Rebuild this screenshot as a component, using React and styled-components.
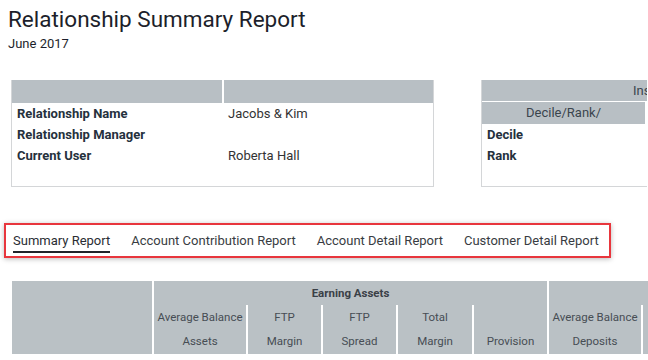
import React from "react";
import styled, { createGlobalStyle } from "styled-components";

const GlobalStyle = createGlobalStyle`
  html, body {
    margin: 0;
    padding: 0;
    overflow: hidden;
    background: #fff;
    font-family: Roboto, "Liberation Sans", Arial, sans-serif;
  }
`;

const Page = styled.div`
  width: 648px;
  height: 360px;
  padding: 6px 0 0 8px;
  box-sizing: border-box;
  overflow: hidden;
`;

const Title = styled.h1`
  margin: 0;
  font-size: 22.5px;
  line-height: 26px;
  font-weight: 400;
  color: #1d1f2b;
`;

const Subtitle = styled.div`
  margin-top: 5px;
  font-size: 13px;
  line-height: 14px;
  color: #1d1f2b;
`;

const InfoRow = styled.div`
  display: flex;
  gap: 47px;
  margin: 29px 0 0 3px;
  width: 1000px;
`;

const InfoBox = styled.div`
  width: ${p => p.$width};
  height: 107px;
  box-sizing: border-box;
  border: 1px solid #d4d6d8;
  border-top: 0;
  ${p => p.$open && "border-right: 0;"}
`;

const HeadGrid = styled.div`
  display: grid;
  grid-template-columns: ${p => p.$cols};
  column-gap: 2px;
  margin-bottom: ${p => p.$gap || 0}px;
`;

const HeadCell = styled.div`
  height: ${p => p.$h}px;
  padding-left: ${p => p.$indent || 0}px;
  background: #b8bfc4;
  font-size: 13px;
  line-height: ${p => p.$h}px;
  color: #3b454e;
  text-align: ${p => (p.$indent ? "left" : "center")};
  white-space: nowrap;
  overflow: hidden;
`;

const BodyRow = styled.div`
  display: grid;
  grid-template-columns: 210px 1fr;
  column-gap: 2px;
  height: 21px;
  align-items: center;
  font-size: 13px;
`;

const Label = styled.div`
  padding-left: 5px;
  font-weight: 700;
  color: #25313d;
`;

const Value = styled.div`
  padding-left: 4px;
  color: #333;
`;

const TabBar = styled.div`
  display: flex;
  gap: 21px;
  width: 607px;
  height: 35px;
  box-sizing: border-box;
  margin: 36px 0 0 -4px;
  padding-left: 7px;
  border: 2px solid #e8363d;
  box-shadow: 0 1px 5px rgba(0, 0, 0, 0.28);
`;

const Tab = styled.div`
  padding: 8px 0 2px;
  height: fit-content;
  font-size: 13px;
  line-height: 16px;
  color: ${p => (p.$active ? "#2a2d33" : "#383c42")};
  border-bottom: 2px solid ${p => (p.$active ? "#20242a" : "transparent")};
`;

const DataGrid = styled.div`
  display: grid;
  grid-template-columns: 140px 92px 73px 73px 74px 73px 92px 100px;
  grid-template-rows: 24px 24px 25px;
  column-gap: 2px;
  margin: 23px 0 0 4px;
  width: 740px;
`;

const GroupCell = styled.div`
  grid-column: ${p => p.$col};
  grid-row: ${p => p.$row || "1"};
  background: #bac1c5;
  font-size: 11.5px;
  font-weight: 700;
  line-height: 24px;
  color: #3a4047;
  text-align: center;
`;

const SubCell = styled.div`
  grid-row: 2 / 4;
  display: flex;
  flex-direction: column;
  background: #bac1c5;
  font-size: 11.5px;
  color: #474d54;
  text-align: center;
  white-space: nowrap;
`;

const SubLine = styled.div`
  height: 24px;
  line-height: 24px;
`;

const leftRows = [
  ["Relationship Name", "Jacobs & Kim"],
  ["Relationship Manager", ""],
  ["Current User", "Roberta Hall"]
];

const tabs = [
  "Summary Report",
  "Account Contribution Report",
  "Account Detail Report",
  "Customer Detail Report"
];

const earning = [
  ["Average Balance", "Assets"],
  ["FTP", "Margin"],
  ["FTP", "Spread"],
  ["Total", "Margin"],
  ["", "Provision"]
];

export default function App() {
  return (
    <Page>
      <GlobalStyle />
      <Title>Relationship Summary Report</Title>
      <Subtitle>June 2017</Subtitle>

      <InfoRow>
        <InfoBox $width="423px">
          <HeadGrid $cols="210px 1fr">
            <HeadCell $h={23} />
            <HeadCell $h={23} />
          </HeadGrid>
          {leftRows.map(([label, value]) => (
            <BodyRow key={label}>
              <Label>{label}</Label>
              <Value>{value}</Value>
            </BodyRow>
          ))}
        </InfoBox>

        <InfoBox $width="166px" $open>
          <HeadGrid $cols="1fr" $gap={1}>
            <HeadCell $h={21} $indent={151}>
              Ins
            </HeadCell>
          </HeadGrid>
          <HeadGrid $cols="163px 1fr">
            <HeadCell $h={22}>Decile/Rank/</HeadCell>
            <HeadCell $h={22} />
          </HeadGrid>
          <BodyRow>
            <Label>Decile</Label>
          </BodyRow>
          <BodyRow>
            <Label>Rank</Label>
          </BodyRow>
        </InfoBox>
      </InfoRow>

      <TabBar>
        {tabs.map((t, i) => (
          <Tab key={t} $active={i === 0}>
            {t}
          </Tab>
        ))}
      </TabBar>

      <DataGrid>
        <GroupCell $col="1" $row="1 / 4" />
        <GroupCell $col="2 / 7">Earning Assets</GroupCell>
        <GroupCell $col="7 / 9" />
        {earning.map(([a, b], i) => (
          <SubCell key={i}>
            <SubLine>{a}</SubLine>
            <SubLine>{b}</SubLine>
          </SubCell>
        ))}
        <SubCell>
          <SubLine>Average Balance</SubLine>
          <SubLine>Deposits</SubLine>
        </SubCell>
        <SubCell>
          <SubLine />
          <SubLine />
        </SubCell>
      </DataGrid>
    </Page>
  );
}
